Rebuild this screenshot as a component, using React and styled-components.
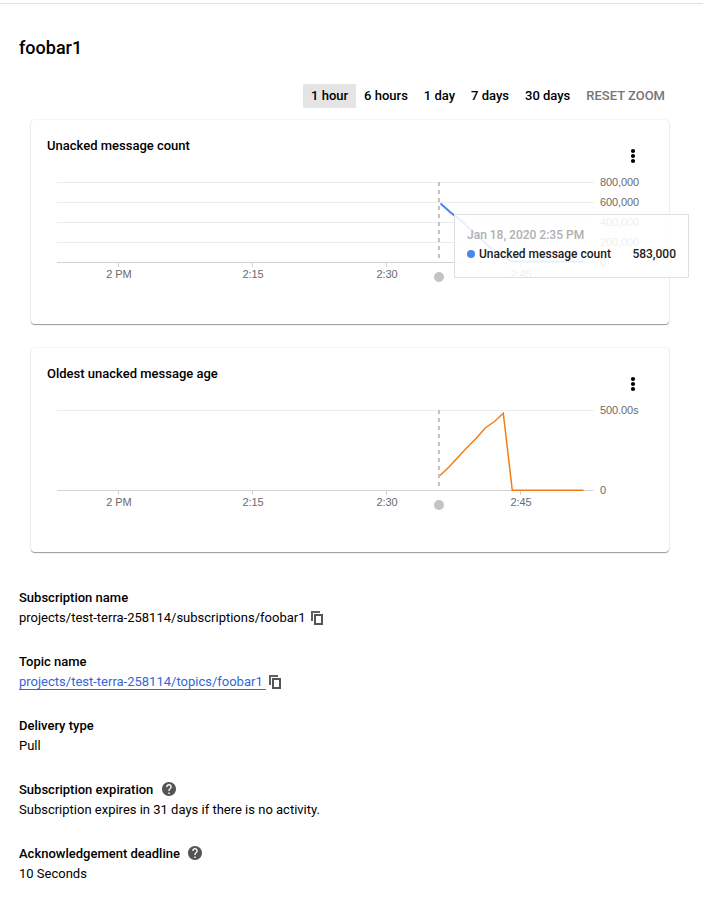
import React from "react";
import styled, { createGlobalStyle } from "styled-components";

const GlobalStyle = createGlobalStyle`
  * { box-sizing: border-box; }
  body {
    margin: 0;
    background: #fff;
    color: #000;
    font: 400 13px/20px Roboto, sans-serif;
    letter-spacing: 0;
  }
`;

const Page = styled.main`
  display: flex;
  flex-direction: column;
  width: 703px;
  height: 901px;
  overflow: hidden;
  padding-top: 3px;
`;

const Divider = styled.hr`
  width: 100%;
  height: 1px;
  margin: 0;
  border: 0;
  background: #e0e0e0;
  flex: none;
`;

const Title = styled.h1`
  margin: 32px 19px 0;
  font-size: 18px;
  line-height: 24px;
  font-weight: 500;
`;

const RangeBar = styled.nav`
  display: flex;
  justify-content: flex-end;
  margin-top: 24px;
  padding-right: 30px;
`;

const RangeButton = styled.button`
  height: 24px;
  padding: 0 8px;
  border: 0;
  border-radius: 1px;
  font: 500 13px/24px Roboto, sans-serif;
  letter-spacing: 0;
  white-space: nowrap;
  color: ${(p) => (p.$muted ? "#757575" : "#000")};
  background: ${(p) => (p.$active ? "#e4e4e4" : "transparent")};
`;

const Cards = styled.section`
  display: flex;
  flex-direction: column;
  gap: 24px;
  margin: 12px 34px 0 31px;
`;

const Card = styled.article`
  position: relative;
  display: flex;
  flex-direction: column;
  height: 204px;
  padding-top: 16px;
  border-radius: 4px;
  background: #fff;
  box-shadow: 0 1px 1px rgba(0, 0, 0, 0.38), 0 0 2px rgba(0, 0, 0, 0.14);
`;

const CardHeader = styled.header`
  display: flex;
  justify-content: space-between;
  height: 32px;
  padding: 0 32px 0 16px;
`;

const CardTitle = styled.h2`
  margin: 0;
  font-size: 13px;
  line-height: 20px;
  font-weight: 500;
`;

const MenuButton = styled.button`
  display: flex;
  width: 8px;
  height: 16px;
  margin-top: 12px;
  padding: 0;
  border: 0;
  background: none;
`;

const ChartSvg = styled.svg`
  display: block;
  width: 638px;
  height: 132px;
  font-family: "Liberation Sans", Arial, sans-serif;
  font-size: 11px;
  letter-spacing: -0.1px;
  fill: #6a6a6a;
`;

const Tooltip = styled.div`
  position: absolute;
  left: 423px;
  top: 94px;
  width: 235px;
  height: 64px;
  padding: 11px 12px 0;
  border: 1px solid #dfdfdf;
  background: rgba(255, 255, 255, 0.88);
  font-size: 12px;
  line-height: 19px;
  font-weight: 500;
`;

const TooltipDate = styled.div`
  color: #b0b0b0;
`;

const TooltipRow = styled.div`
  display: flex;
  align-items: center;
  color: #212121;
`;

const SeriesDot = styled.i`
  width: 8px;
  height: 8px;
  margin: -1px 4px 0 0;
  border-radius: 50%;
  background: #4a86ee;
`;

const TooltipValue = styled.span`
  margin-left: auto;
`;

const Details = styled.dl`
  display: flex;
  flex-direction: column;
  gap: 24px;
  margin: 36px 19px 0;
`;

const Detail = styled.div`
  display: flex;
  flex-direction: column;
`;

const Term = styled.dt`
  display: flex;
  align-items: center;
  gap: 8px;
  height: 20px;
  font-weight: 500;
`;

const Value = styled.dd`
  display: flex;
  align-items: center;
  height: 20px;
  margin: 0;
`;

const Link = styled.a`
  height: 16px;
  padding-right: 3px;
  line-height: 16px;
  color: #3367d6;
  border-bottom: 1px solid #3367d6;
`;

const Icon = styled.svg`
  display: block;
  flex: none;
  margin-left: ${(p) => p.$gap || "0"};
  margin-bottom: ${(p) => p.$lift || "0"};
`;

const CopyIcon = ({ gap }) => (
  <Icon width="12" height="14" viewBox="0 0 12 14" $gap={gap}>
    <path d="M1 10V1H9" fill="none" stroke="#606060" strokeWidth="2" />
    <rect x="4" y="4" width="7" height="9" fill="none" stroke="#555" strokeWidth="2" />
  </Icon>
);

const HelpIcon = ({ gap }) => (
  <Icon width="14" height="14" viewBox="2 2 20 20" $lift="2px" $gap={gap}>
    <path
      fill="#555"
      d="M12 2C6.48 2 2 6.48 2 12s4.48 10 10 10 10-4.48 10-10S17.52 2 12 2zm1 17h-2v-2h2v2zm2.07-7.75l-.9.92C13.45 12.9 13 13.5 13 15h-2v-.5c0-1.1.45-2.1 1.17-2.83l1.24-1.26c.37-.36.59-.86.59-1.41 0-1.1-.9-2-2-2s-2 .9-2 2H8c0-2.21 1.79-4 4-4s4 1.79 4 4c0 .88-.36 1.68-.93 2.25z"
    />
  </Icon>
);

const MoreIcon = () => (
  <Icon width="8" height="16" viewBox="0 0 8 16">
    {[3, 8, 13].map((y) => (
      <circle key={y} cx="4" cy={y} r="2.1" fill="#000" />
    ))}
  </Icon>
);

const times = ["2 PM", "2:15", "2:30", "2:45"];

const Chart = ({ labels, points, color, width }) => {
  const step = 80 / (labels.length - 1);
  return (
    <ChartSvg viewBox="0 0 638 132">
      {labels.map((label, i) => {
        const y = 14 + i * step;
        const axis = i === labels.length - 1;
        return (
          <g key={label}>
            <path d={`M26 ${y + 0.5}H562.5`} stroke={axis ? "#d2d2d2" : "#ebebeb"} />
            <text x="569" y={y + 4}>{label}</text>
          </g>
        );
      })}
      {times.map((time, i) => (
        <g key={time}>
          <path d={`M${87.5 + i * 134} 95V99`} stroke="#d2d2d2" />
          <text x={88 + i * 134} y="110" textAnchor="middle">{time}</text>
        </g>
      ))}
      <path d="M408 14V92" stroke="#c2c2c2" strokeWidth="2" strokeDasharray="4 4" />
      <polyline points={points} fill="none" stroke={color} strokeWidth={width} />
      <circle cx="408" cy="109" r="5" fill="#c4c4c4" />
    </ChartSvg>
  );
};

const charts = [
  {
    title: "Unacked message count",
    labels: ["800,000", "600,000", "400,000", "200,000", "0"],
    points: "409.5,35.5 419,44 430,52.5 462,82 472,88 481,93.5 552,93.5",
    color: "#4285f4",
    width: 2,
    tooltip: true,
  },
  {
    title: "Oldest unacked message age",
    labels: ["500.00s", "0"],
    points: "409,79.5 418,71 436,51.5 445,42.5 454.5,31.7 463.5,25.5 472.3,17.3 481.3,94.3 552.5,94.3",
    color: "#f57c14",
    width: 1.5,
  },
];

export default function App() {
  return (
    <>
      <GlobalStyle />
      <Page>
        <Divider />
        <Title>foobar1</Title>
        <RangeBar>
          <RangeButton $active>1 hour</RangeButton>
          <RangeButton>6 hours</RangeButton>
          <RangeButton>1 day</RangeButton>
          <RangeButton>7 days</RangeButton>
          <RangeButton>30 days</RangeButton>
          <RangeButton $muted>RESET ZOOM</RangeButton>
        </RangeBar>
        <Cards>
          {charts.map((chart) => (
            <Card key={chart.title}>
              <CardHeader>
                <CardTitle>{chart.title}</CardTitle>
                <MenuButton aria-label="More options"><MoreIcon /></MenuButton>
              </CardHeader>
              <Chart {...chart} />
              {chart.tooltip && (
                <Tooltip>
                  <TooltipDate>Jan 18, 2020 2:35 PM</TooltipDate>
                  <TooltipRow>
                    <SeriesDot />
                    Unacked message count
                    <TooltipValue>583,000</TooltipValue>
                  </TooltipRow>
                </Tooltip>
              )}
            </Card>
          ))}
        </Cards>
        <Details>
          <Detail>
            <Term>Subscription name</Term>
            <Value>
              projects/test-terra-258114/subscriptions/foobar1
              <CopyIcon gap="6px" />
            </Value>
          </Detail>
          <Detail>
            <Term>Topic name</Term>
            <Value>
              <Link>projects/test-terra-258114/topics/foobar1</Link>
              <CopyIcon gap="3px" />
            </Value>
          </Detail>
          <Detail>
            <Term>Delivery type</Term>
            <Value>Pull</Value>
          </Detail>
          <Detail>
            <Term>Subscription expiration<HelpIcon gap="1px" /></Term>
            <Value>Subscription expires in 31 days if there is no activity.</Value>
          </Detail>
          <Detail>
            <Term>Acknowledgement deadline<HelpIcon /></Term>
            <Value>10 Seconds</Value>
          </Detail>
        </Details>
      </Page>
    </>
  );
}
